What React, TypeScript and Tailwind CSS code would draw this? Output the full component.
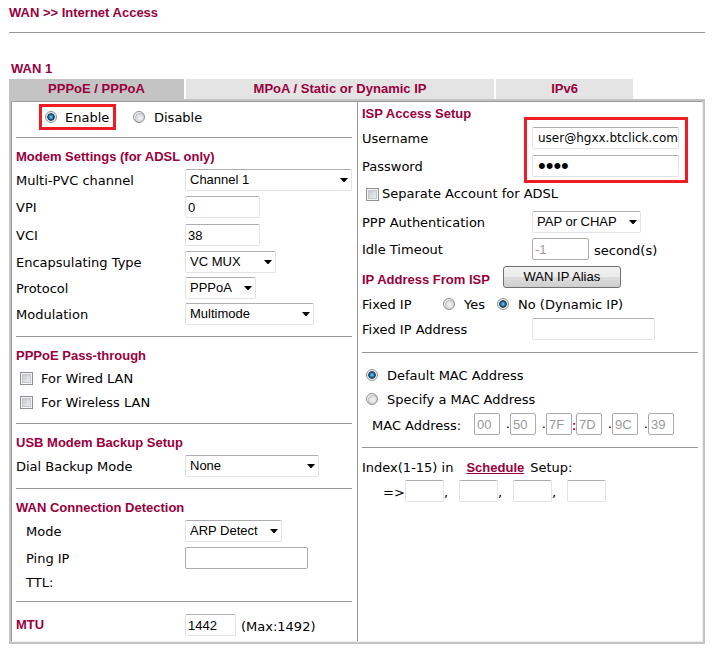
import { Fragment, useState } from "react";
import type { InputHTMLAttributes, ReactNode } from "react";

const FIELD =
  "h-[22px] rounded-[2px] border border-[#e2e3ea] border-t-[#abadb3] bg-white px-[2px] font-['Liberation_Sans',Arial,sans-serif] text-[13px] leading-[20px] text-black outline-none disabled:border-[#ababab] disabled:text-[#9a9a9a]";

const CREDENTIAL = "h-[22px] w-[147px] rounded-[2px] border border-[#e2e3ea] border-t-[#abadb3] pl-[5px] pr-0 outline-none";

function Heading({ children }: { children: ReactNode }) {
  return (
    <h2 className="flex h-5 items-center whitespace-nowrap font-['Liberation_Sans',Arial,sans-serif] text-[13px] font-bold text-[#99003d]">
      {children}
    </h2>
  );
}

function Rule() {
  return <hr className="h-px border-0 bg-[#999999]" />;
}

type RowProps = {
  label: string;
  htmlFor: string;
  tall?: boolean;
  indent?: boolean;
  wide?: boolean;
  children: ReactNode;
};

function Row({ label, htmlFor, tall, indent, wide, children }: RowProps) {
  return (
    <div className={`flex items-center ${tall ? "h-7" : "h-[26px]"}`}>
      <label htmlFor={htmlFor} className={`shrink-0 pt-[2px] ${wide ? "w-[170px]" : "w-[169px]"} ${indent ? "pl-[10px]" : ""}`}>
        {label}
      </label>
      {children}
    </div>
  );
}

function Select({ id, width, options }: { id: string; width: string; options: string[] }) {
  return (
    <div className={`relative ${width}`}>
      <select id={id} className={`${FIELD} block w-full appearance-none pl-[4px]`}>
        {options.map((o) => (
          <option key={o}>{o}</option>
        ))}
      </select>
      <svg className="pointer-events-none absolute right-[4px] top-[9px]" width="8" height="4" viewBox="0 0 8 4" aria-hidden="true">
        <path d="M0 0h8L4.5 4h-1z" fill="#000" />
      </svg>
    </div>
  );
}

function Radio(props: InputHTMLAttributes<HTMLInputElement>) {
  return (
    <input
      type="radio"
      {...props}
      className="size-3 shrink-0 appearance-none rounded-full border border-[#8e8f8f] bg-[radial-gradient(circle_at_60%_60%,#f4f4f4_0%,#dcdde0_40%,#bfc3c9_58%,#f4f4f4_64%)] checked:bg-[radial-gradient(circle_at_50%_50%,#7fd6f5_0%,#2a86b5_25%,#0d2f4e_48%,#e8e8e8_58%,#f4f4f4_70%)]"
    />
  );
}

function Check({ id }: { id: string }) {
  return (
    <input
      type="checkbox"
      id={id}
      className="size-[13px] shrink-0 appearance-none border border-[#8e8f8f] bg-[linear-gradient(135deg,#bcc1c9,#f6f6f6)] shadow-[inset_0_0_0_1px_#f4f4f4,inset_0_0_0_2px_#c4c8ce] checked:bg-none checked:bg-[#2a86b5]"
    />
  );
}

export default function App() {
  const [enabled, setEnabled] = useState(true);
  const [fixedIp, setFixedIp] = useState(false);
  const [customMac, setCustomMac] = useState(false);

  return (
    <main className="bg-white pb-[9px] pl-[9px] pr-3 font-['DejaVu_Sans',Verdana,sans-serif] text-[13px] leading-4 text-black">
      <h1 className="pt-[5px] pb-[11px] font-['Liberation_Sans',Arial,sans-serif] text-[13px] font-bold text-[#99003d]">
        WAN &gt;&gt; Internet Access
      </h1>
      <Rule />
      <div className="pl-[2px] pt-[26px]">
        <Heading>WAN 1</Heading>
      </div>
      <nav className="grid h-5 grid-cols-[175fr_308fr_137fr_70fr] gap-[2px] font-['Liberation_Sans',Arial,sans-serif] text-[13px] font-bold text-[#99003d]">
        <button className="bg-[#c4c4c4]">PPPoE / PPPoA</button>
        <button className="bg-[#e4e4e4]">MPoA / Static or Dynamic IP</button>
        <button className="bg-[#e4e4e4]">IPv6</button>
      </nav>

      <form className="border-2 border-[#c4c4c4]">
        <div className="grid grid-cols-2 whitespace-nowrap border border-[#999999] border-b-[#eeeeee] border-r-[#eeeeee]">
          <div className="pl-1 pr-[5px]">
            <div className="flex h-[35px] items-start gap-[17px] pl-[23px] pt-[2px]">
              <label className="flex h-[26px] w-[77px] items-center gap-[8px] border-[3px] border-[#ee1c25] pl-[3px]">
                <Radio name="state" checked={enabled} onChange={() => setEnabled(true)} />
                <span className="pt-[2px]">Enable</span>
              </label>
              <label className="flex h-[26px] items-center gap-[9px]">
                <Radio name="state" checked={!enabled} onChange={() => setEnabled(false)} />
                <span className="pt-[2px]">Disable</span>
              </label>
            </div>
            <Rule />
            <section className="py-[9px]">
              <Heading>Modem Settings (for ADSL only)</Heading>
              <Row label="Multi-PVC channel" htmlFor="pvc">
                <Select id="pvc" width="w-[167px]" options={["Channel 1", "Channel 2"]} />
              </Row>
              <Row label="VPI" htmlFor="vpi" tall>
                <input id="vpi" defaultValue="0" className={`${FIELD} w-[75px]`} />
              </Row>
              <Row label="VCI" htmlFor="vci" tall>
                <input id="vci" defaultValue="38" className={`${FIELD} w-[75px]`} />
              </Row>
              <Row label="Encapsulating Type" htmlFor="encap">
                <Select id="encap" width="w-[91px]" options={["VC MUX", "LLC/SNAP"]} />
              </Row>
              <Row label="Protocol" htmlFor="protocol">
                <Select id="protocol" width="w-[71px]" options={["PPPoA", "PPPoE"]} />
              </Row>
              <Row label="Modulation" htmlFor="modulation">
                <Select id="modulation" width="w-[129px]" options={["Multimode"]} />
              </Row>
            </section>
            <Rule />
            <section className="py-[9px]">
              <Heading>PPPoE Pass-through</Heading>
              <div className="flex h-6 items-center gap-[8px] pl-1">
                <Check id="wired" />
                <label htmlFor="wired" className="pt-[2px]">For Wired LAN</label>
              </div>
              <div className="flex h-6 items-center gap-[8px] pl-1">
                <Check id="wireless" />
                <label htmlFor="wireless" className="pt-[2px]">For Wireless LAN</label>
              </div>
            </section>
            <Rule />
            <section className="py-[9px]">
              <Heading>USB Modem Backup Setup</Heading>
              <Row label="Dial Backup Mode" htmlFor="dial">
                <Select id="dial" width="w-[134px]" options={["None"]} />
              </Row>
            </section>
            <Rule />
            <section className="py-[9px]">
              <Heading>WAN Connection Detection</Heading>
              <Row label="Mode" htmlFor="mode" indent>
                <Select id="mode" width="w-[97px]" options={["ARP Detect", "Ping Detect"]} />
              </Row>
              <Row label="Ping IP" htmlFor="ping" tall indent>
                <input id="ping" disabled className={`${FIELD} w-[123px]`} />
              </Row>
              <p className="flex h-5 items-center pl-[10px] pt-[2px]">TTL:</p>
            </section>
            <Rule />
            <div className="flex h-[39px] items-center pt-[7px]">
              <label htmlFor="mtu" className="w-[169px] font-['Liberation_Sans',Arial,sans-serif] text-[13px] font-bold text-[#99003d]">
                MTU
              </label>
              <input id="mtu" defaultValue="1442" className={`${FIELD} w-[51px]`} />
              <span className="pl-[5px] pt-[4px]">(Max:1492)</span>
            </div>
          </div>

          <div className="border-l border-[#999999] px-1">
            <section className="pb-[10px] pt-[2px]">
              <Heading>ISP Access Setup</Heading>
              <div className="relative">
                <Row label="Username" htmlFor="user" tall wide>
                  <input id="user" defaultValue="user@hgxx.btclick.com" className={`${CREDENTIAL} text-[12px]`} />
                </Row>
                <Row label="Password" htmlFor="pass" tall wide>
                  <input
                    id="pass"
                    type="password"
                    defaultValue="abcd"
                    className={`${CREDENTIAL} font-['Liberation_Sans',Arial,sans-serif] text-[22px] leading-[20px]`}
                  />
                </Row>
                <div className="pointer-events-none absolute -bottom-[3px] -top-[7px] left-[162px] w-[164px] border-[3px] border-[#ee1c25]" />
              </div>
              <div className="flex h-7 items-center gap-[3px] pl-1">
                <Check id="separate" />
                <label htmlFor="separate">Separate Account for ADSL</label>
              </div>
              <Row label="PPP Authentication" htmlFor="auth" tall wide>
                <Select id="auth" width="w-[109px]" options={["PAP or CHAP", "PAP Only"]} />
              </Row>
              <Row label="Idle Timeout" htmlFor="idle" wide>
                <input id="idle" defaultValue="-1" disabled className={`${FIELD} w-[57px]`} />
                <span className="pl-[5px] pt-[4px]">second(s)</span>
              </Row>
              <div className="flex h-[30px] items-center gap-[13px]">
                <div className="pt-[6px]">
                  <Heading>IP Address From ISP</Heading>
                </div>
                <button
                  type="button"
                  className="h-[22px] w-[118px] rounded-[3px] border border-[#707070] bg-[linear-gradient(#f2f2f2_0%,#ebebeb_50%,#dddddd_50%,#cfcfcf_100%)] font-['Liberation_Sans',Arial,sans-serif] text-[13px] leading-[18px]"
                >
                  WAN IP Alias
                </button>
              </div>
              <div className="flex h-6 items-center">
                <span className="w-[81px] pt-[2px]">Fixed IP</span>
                <label className="flex items-center gap-[9px] pr-3">
                  <Radio name="fixed" checked={fixedIp} onChange={() => setFixedIp(true)} />
                  <span className="pt-[2px]">Yes</span>
                </label>
                <label className="flex items-center gap-[9px]">
                  <Radio name="fixed" checked={!fixedIp} onChange={() => setFixedIp(false)} />
                  <span className="pt-[2px]">No (Dynamic IP)</span>
                </label>
              </div>
              <Row label="Fixed IP Address" htmlFor="ip" wide>
                <input id="ip" className={`${FIELD} w-[123px]`} />
              </Row>
            </section>
            <Rule />
            <section className="py-[10px]">
              <label className="flex h-6 items-center gap-[9px] pl-1">
                <Radio name="mac" checked={!customMac} onChange={() => setCustomMac(false)} />
                <span className="pt-[2px]">Default MAC Address</span>
              </label>
              <label className="flex h-6 items-center gap-[9px] pl-1">
                <Radio name="mac" checked={customMac} onChange={() => setCustomMac(true)} />
                <span className="pt-[2px]">Specify a MAC Address</span>
              </label>
              <div className="flex h-[26px] items-center pl-[10px]">
                <span className="w-[102px] pt-[4px]">MAC Address:</span>
                {["00", "50", "7F", "7D", "9C", "39"].map((octet, i) => (
                  <Fragment key={i}>
                    {i === 3 && (
                      <span className="w-[4px] pt-[4px] text-center font-['Liberation_Sans',Arial,sans-serif] font-bold text-[#99003d]">:</span>
                    )}
                    {i !== 0 && i !== 3 && <span className="w-[10px] text-right">.</span>}
                    <input aria-label={`MAC octet ${i + 1}`} defaultValue={octet} disabled={!customMac} className={`${FIELD} w-[26px]`} />
                  </Fragment>
                ))}
              </div>
            </section>
            <Rule />
            <section className="pt-[10px]">
              <p className="flex h-5 items-center">
                Index(1-15) in
                <a href="#schedule" className="ml-[13px] mr-[6px] font-['Liberation_Sans',Arial,sans-serif] text-[13px] font-bold text-[#99003d] underline">
                  Schedule
                </a>
                Setup:
              </p>
              <div className="flex h-[26px] items-center pl-[21px]">
                <span className="w-[22px] pt-[4px]">=&gt;</span>
                {[1, 2, 3, 4].map((n) => (
                  <Fragment key={n}>
                    <input aria-label={`Schedule index ${n}`} className={`${FIELD} w-[39px]`} />
                    {n < 4 && <span className="w-[15px] pt-[4px]">,</span>}
                  </Fragment>
                ))}
              </div>
            </section>
          </div>
        </div>
      </form>
    </main>
  );
}
